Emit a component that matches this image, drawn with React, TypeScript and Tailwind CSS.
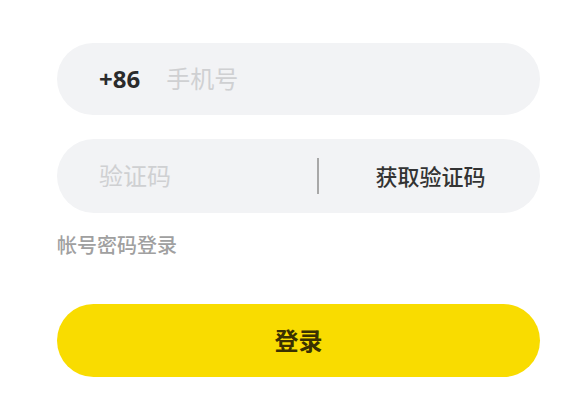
export default function App() {
  return (
    <div className="h-[410px] w-[575px] bg-white">
      <div
        className="ml-[57px] flex w-[483px] flex-col pt-[43px]"
        style={{ fontFamily: '"Noto Sans", "Noto Sans CJK SC", sans-serif' }}
      >
        {/* 手机号 */}
        <div className="flex h-[72px] items-center rounded-full bg-[#f2f3f5] pl-[42px]">
          <span className="text-[24px] font-bold text-[#2b2b2b]">+86</span>
          <span className="ml-[26px] text-[24px] text-[#cfd0d2]">手机号</span>
        </div>

        {/* 验证码 */}
        <div className="mt-[24px] flex h-[74px] items-center rounded-full bg-[#f2f3f5] pl-[42px]">
          <span className="flex-1 text-[24px] text-[#cfd0d2]">验证码</span>
          <div className="h-[36px] w-[2px] bg-[#a8a8a8]" />
          <span className="w-[221px] pl-[2px] text-center text-[22px] font-medium text-[#333333]">
            获取验证码
          </span>
        </div>

        <div className="mt-[20px] text-[20px] font-medium leading-[26px] text-[#a0a0a0]">
          帐号密码登录
        </div>

        <button
          type="button"
          className="mt-[45px] flex h-[73px] items-center justify-center rounded-full bg-[#f9dc00] text-[24px] font-bold text-[#3a3100]"
        >
          登录
        </button>
      </div>
    </div>
  );
}
